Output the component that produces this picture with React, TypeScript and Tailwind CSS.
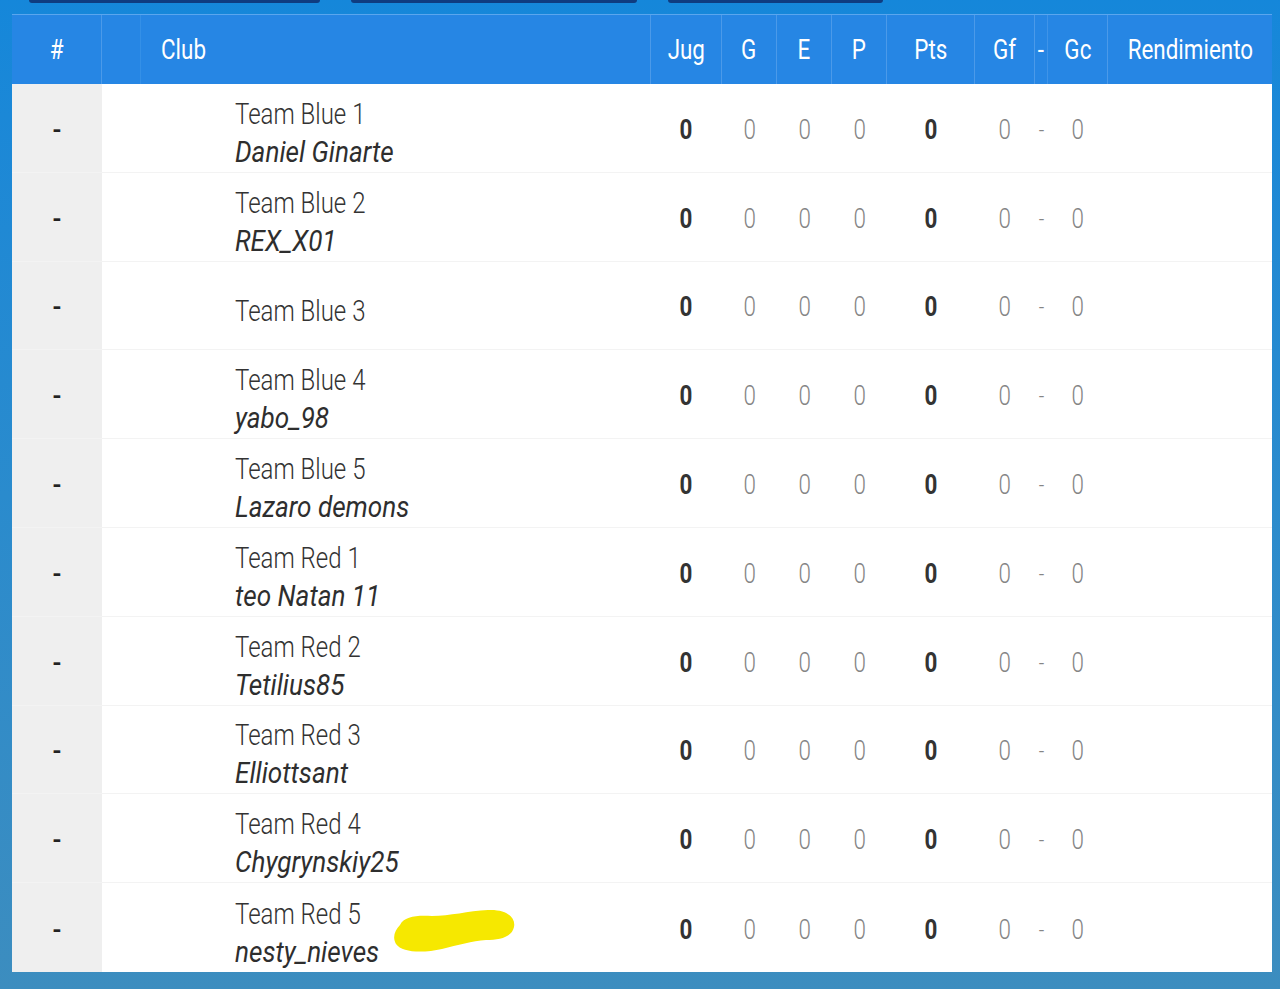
import React from 'react';

const rows = [
  { team: 'Team Blue 1', player: 'Daniel Ginarte' },
  { team: 'Team Blue 2', player: 'REX_X01' },
  { team: 'Team Blue 3', player: '' },
  { team: 'Team Blue 4', player: 'yabo_98' },
  { team: 'Team Blue 5', player: 'Lazaro demons' },
  { team: 'Team Red 1', player: 'teo Natan 11' },
  { team: 'Team Red 2', player: 'Tetilius85' },
  { team: 'Team Red 3', player: 'Elliottsant' },
  { team: 'Team Red 4', player: 'Chygrynskiy25' },
  { team: 'Team Red 5', player: 'nesty_nieves', marked: true },
];

const cols = 'grid grid-cols-[90px_39px_510px_71px_55px_55px_55px_88px_60px_13px_60px_164px]';

// narrow text: the source uses a condensed face we don't have
const N = ({ children, left }: { children: React.ReactNode; left?: boolean }) => (
  <span className={`inline-block whitespace-nowrap scale-x-[0.8] ${left ? 'origin-left' : 'origin-center'}`}>{children}</span>
);

const Scribble = () => (
  <svg width="124" height="44" viewBox="0 0 124 44" className="absolute left-[290px] top-[26px]">
    <path
      d="M8 16 C12 7 26 6 40 7 C58 7 76 2 96 1 C114 0 124 8 122 18 C120 28 108 31 94 31 C80 32 66 36 50 40 C32 44 10 44 4 35 C0 28 3 21 8 16 Z"
      fill="#f6e800"
    />
  </svg>
);

const Num = ({ bold, dash }: { bold?: boolean; dash?: boolean }) => (
  <div
    className={`flex items-center justify-center pt-[4px] ${dash ? 'text-[24px] text-[#9a9a9a]' : 'text-[28px]'} ${
      bold ? 'font-bold text-[#333]' : 'font-light text-[#858585]'
    }`}
  >
    <N>{dash ? '-' : '0'}</N>
  </div>
);

export default function App() {
  return (
    <div
      className="w-[1280px] h-[989px] overflow-hidden bg-gradient-to-b from-[#1587da] via-[#2a8bcd] to-[#3c8dbf]"
      style={{ fontFamily: 'Roboto, "DejaVu Sans Condensed", sans-serif' }}
    >
      {/* tabs peeking at the top */}
      <div className="flex h-[3px] pl-[29px]">
        <div className="w-[291px] bg-[#0f3c80] rounded-b-sm" />
        <div className="w-[286px] ml-[31px] bg-[#0f3c80] rounded-b-sm" />
        <div className="w-[215px] ml-[31px] bg-[#0f3c80] rounded-b-sm" />
      </div>

      <div className="ml-[12px] mt-[11px] w-[1260px] bg-white">
        {/* header */}
        <div className={`${cols} h-[70px] bg-[#2686e4] border-t border-[#5aa6ee] text-white text-[28px]`}>
          <div className="flex items-center justify-center border-r border-[#4b9ae9]"><N>#</N></div>
          <div className="border-r border-[#3490e7]" />
          <div className="flex items-center pl-[20px] border-r border-[#4b9ae9]"><N left>Club</N></div>
          <div className="flex items-center justify-center border-r border-[#4b9ae9]"><N>Jug</N></div>
          <div className="flex items-center justify-center border-r border-[#4b9ae9]"><N>G</N></div>
          <div className="flex items-center justify-center border-r border-[#4b9ae9]"><N>E</N></div>
          <div className="flex items-center justify-center border-r border-[#4b9ae9]"><N>P</N></div>
          <div className="flex items-center justify-center border-r border-[#4b9ae9]"><N>Pts</N></div>
          <div className="flex items-center justify-center border-r border-[#4b9ae9]"><N>Gf</N></div>
          <div className="flex items-center justify-center border-r border-[#3f94e8]"><N>-</N></div>
          <div className="flex items-center justify-center border-r border-[#4b9ae9]"><N>Gc</N></div>
          <div className="flex items-center justify-center"><N>Rendimiento</N></div>
        </div>

        {/* body */}
        {rows.map((r, i) => (
          <div key={i} className={`${cols} h-[88.8px] border-b border-[#f3f3f3] last:border-b-0`}>
            <div className="bg-[#efefef] flex items-center justify-center pt-1 text-[24px] font-bold text-[#222]">-</div>
            <div className="col-span-2 relative flex flex-col justify-center pl-[133px] pt-[10px]">
              <div className="text-[30px] leading-[37px] font-light text-[#333]"><N left>{r.team}</N></div>
              {r.player && (
                <div className="text-[30px] leading-[39px] italic text-[#2e2e2e]">
                  <span className="inline-block whitespace-nowrap origin-left scale-x-[0.87]">{r.player}</span>
                </div>
              )}
              {r.marked && <Scribble />}
            </div>
            <Num bold />
            <Num />
            <Num />
            <Num />
            <Num bold />
            <Num />
            <Num dash />
            <Num />
            <div />
          </div>
        ))}
      </div>
    </div>
  );
}
